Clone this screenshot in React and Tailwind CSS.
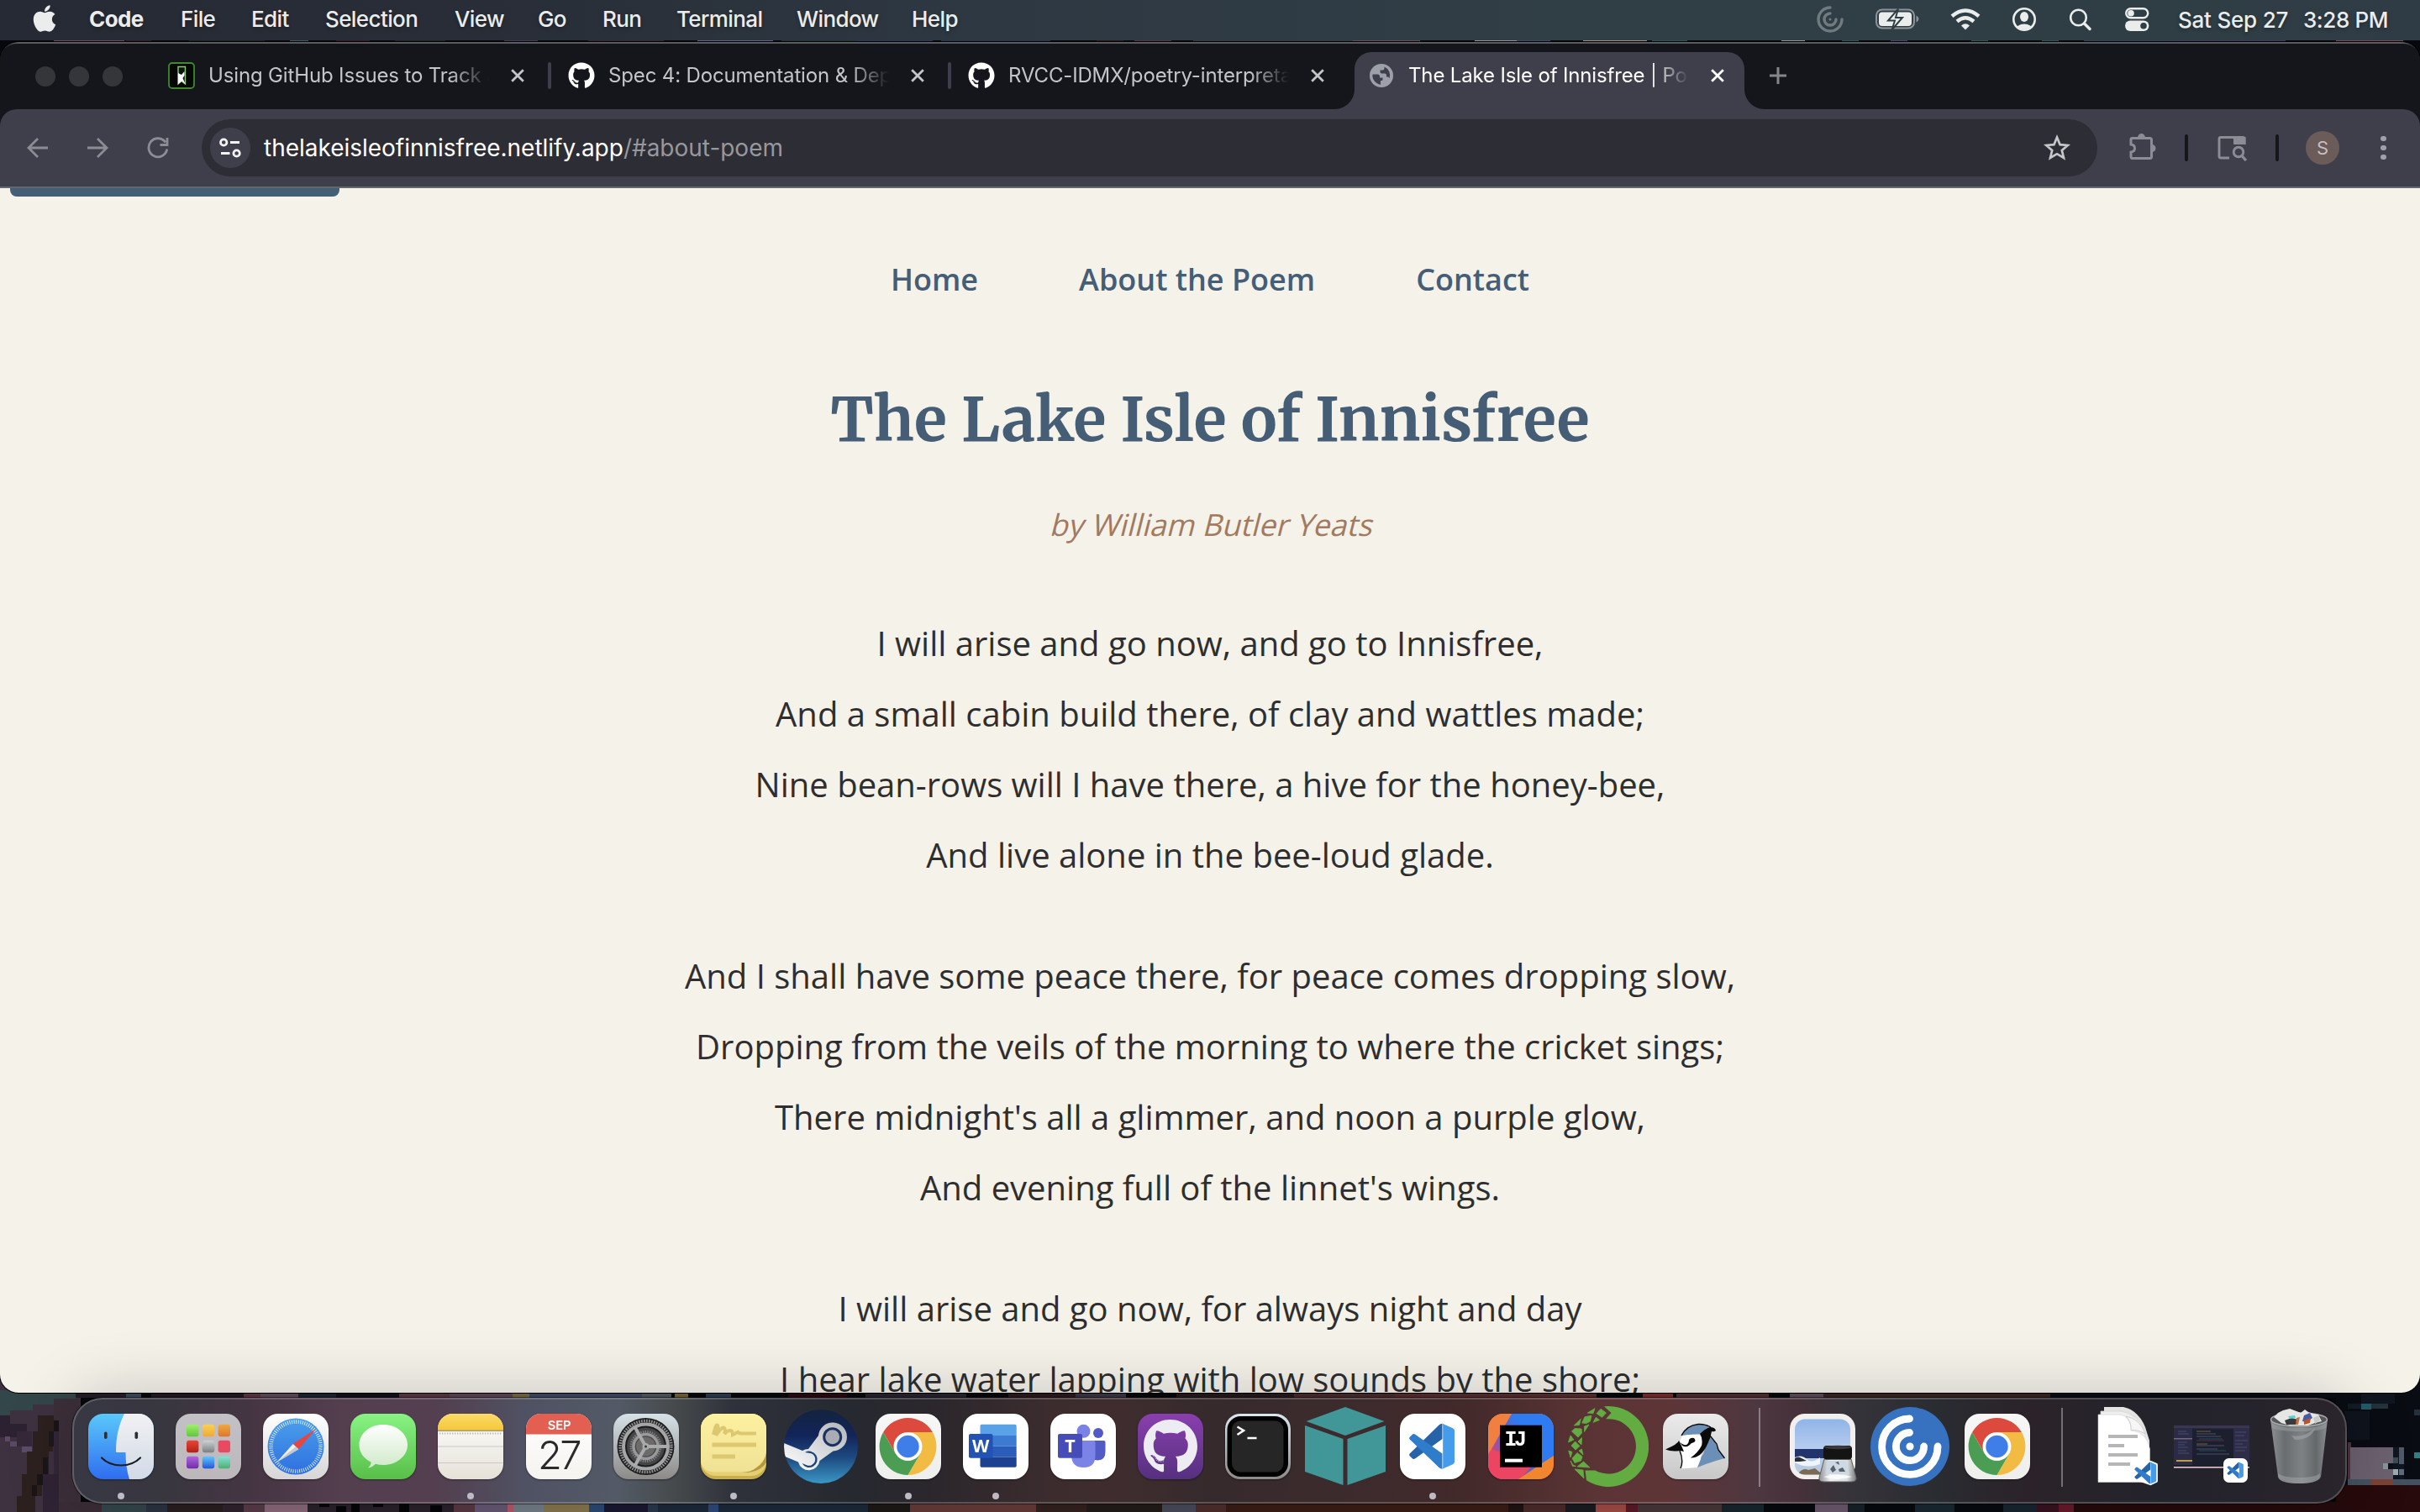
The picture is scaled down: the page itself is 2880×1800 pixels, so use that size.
import React from "react";
import { FaApple, FaGithub } from "react-icons/fa";

const MENUS = [
  ["Code", "w-[109px] font-bold"],
  ["File", "w-[84px]"],
  ["Edit", "w-[88px]"],
  ["Selection", "w-[154px]"],
  ["View", "w-[99px]"],
  ["Go", "w-[77px]"],
  ["Run", "w-[88px]"],
  ["Terminal", "w-[143px]"],
  ["Window", "w-[137px]"],
  ["Help", "w-[80px]"],
];

const STANZAS = [
  [
    "I will arise and go now, and go to Innisfree,",
    "And a small cabin build there, of clay and wattles made;",
    "Nine bean-rows will I have there, a hive for the honey-bee,",
    "And live alone in the bee-loud glade.",
  ],
  [
    "And I shall have some peace there, for peace comes dropping slow,",
    "Dropping from the veils of the morning to where the cricket sings;",
    "There midnight's all a glimmer, and noon a purple glow,",
    "And evening full of the linnet's wings.",
  ],
  [
    "I will arise and go now, for always night and day",
    "I hear lake water lapping with low sounds by the shore;",
  ],
];

/* ---------- Desktop wallpaper (pixel art) ---------- */

const PIXELS = [
  // sliver under the menu bar
  [64, 48, 84, 2, "#6b4a5e"], [150, 48, 30, 2, "#3a1a22"], [225, 48, 90, 2, "#12281f"], [345, 48, 22, 2, "#3c5a66"],
  [400, 48, 40, 2, "#3a1626"], [470, 48, 60, 2, "#16281f"], [600, 48, 40, 2, "#4a3556"], [700, 48, 90, 2, "#3b2238"],
  [830, 48, 90, 2, "#5a6494"], [930, 48, 90, 2, "#1b3a2c"], [1020, 48, 90, 2, "#26395c"], [1120, 48, 130, 2, "#24384f"],
  [1305, 48, 32, 2, "#2c160e"], [1350, 48, 44, 2, "#5a2f4a"], [1420, 48, 190, 2, "#2c3d40"], [1610, 48, 80, 2, "#6a4a5c"],
  [1755, 48, 50, 2, "#90989a"], [1805, 48, 40, 2, "#3a4a70"], [1884, 48, 76, 2, "#a58f84"], [1966, 48, 42, 2, "#1f5a58"],
  [2120, 48, 28, 2, "#90989a"], [2192, 48, 20, 2, "#1f5a5c"], [2250, 48, 20, 2, "#46456a"], [2346, 48, 20, 2, "#1f5a5c"],
  [2430, 48, 20, 2, "#1f5a5c"], [2480, 48, 110, 2, "#2f4458"], [2590, 48, 130, 2, "#343c66"], [2780, 48, 80, 2, "#7a4a4c"],
  // left side
  [0, 1640, 96, 170, "#3e3140"], [0, 1655, 90, 12, "#334649"], [0, 1667, 64, 5, "#33464a"], [0, 1672, 39, 7, "#33464a"],
  [0, 1679, 12, 6, "#33464a"], [64, 1665, 30, 130, "#3c2f3a"], [0, 1685, 12, 26, "#2c2130"], [12, 1695, 20, 16, "#2d2231"],
  [6, 1710, 6, 6, "#5a4a64"], [12, 1716, 13, 6, "#5a4a64"], [26, 1722, 12, 7, "#5c4c68"], [20, 1704, 18, 18, "#352838"],
  [45, 1685, 19, 19, "#2d211f"], [39, 1704, 24, 24, "#2d211f"], [32, 1728, 26, 27, "#2d211f"], [26, 1755, 24, 26, "#2d211f"],
  [20, 1781, 22, 19, "#2d211f"], [64, 1691, 6, 13, "#1a1416"], [58, 1704, 6, 18, "#1f1719"], [51, 1735, 6, 20, "#1c1517"],
  [44, 1755, 7, 13, "#1c1517"], [38, 1768, 6, 13, "#1c1517"], [64, 1704, 6, 96, "#33263a"], [51, 1755, 19, 45, "#2f2335"],
  // right side
  [2780, 1640, 100, 170, "#090c12"], [2794, 1671, 16, 6, "#121c24"], [2810, 1671, 12, 7, "#265a68"], [2822, 1671, 20, 6, "#23323c"],
  [2810, 1658, 40, 13, "#10161f"], [2790, 1680, 30, 34, "#0f141d"], [2873, 1678, 7, 7, "#24303a"], [2873, 1729, 7, 7, "#2f7f80"],
  [2794, 1717, 4, 50, "#4a3540"], [2797, 1723, 51, 39, "#6c616f"], [2848, 1723, 13, 39, "#10161f"], [2855, 1723, 6, 20, "#4f5a66"],
  [2836, 1742, 6, 7, "#87949e"], [2842, 1742, 6, 7, "#0c1118"], [2848, 1735, 6, 7, "#3d4a56"], [2848, 1749, 6, 7, "#a0abb0"],
  [2855, 1749, 6, 7, "#5f6c78"], [2794, 1761, 28, 7, "#44525f"], [2822, 1761, 26, 7, "#7a4236"], [2848, 1761, 32, 7, "#44525f"],
  [2780, 1768, 100, 32, "#270a0b"],
  // row between the window and the dock
  [90, 1658, 60, 6, "#241d28"], [150, 1658, 18, 6, "#3a4a5c"], [180, 1658, 110, 6, "#231a22"], [290, 1658, 20, 6, "#5f3442"],
  [310, 1658, 45, 6, "#5f4a5a"], [355, 1658, 45, 6, "#1a2432"], [400, 1658, 75, 6, "#15101c"], [475, 1658, 60, 6, "#5b3642"],
  [535, 1658, 75, 6, "#5c4456"], [610, 1658, 20, 6, "#77683c"], [630, 1658, 134, 6, "#3d4864"], [764, 1658, 35, 6, "#51575f"],
  [803, 1658, 16, 6, "#746432"], [840, 1658, 30, 6, "#2a3d52"], [938, 1658, 70, 6, "#2b0a10"], [1030, 1658, 120, 6, "#282431"],
  [1200, 1658, 80, 6, "#2c1a1e"], [1280, 1658, 60, 6, "#3a3644"], [1400, 1658, 140, 6, "#26191b"], [1540, 1658, 120, 6, "#4a2a2b"],
  [1660, 1658, 240, 6, "#5a2c2d"], [1955, 1658, 36, 6, "#7a2a2a"], [1995, 1658, 110, 6, "#502c2d"], [2130, 1658, 40, 6, "#5c4a5c"],
  [2170, 1658, 270, 6, "#3a2422"], [2440, 1658, 340, 6, "#0a0d12"],
  // row under the dock
  [70, 1788, 52, 12, "#3b2d37"], [121, 1788, 53, 12, "#34474c"], [174, 1788, 25, 12, "#2c3442"], [199, 1788, 66, 12, "#2a1e20"],
  [265, 1788, 25, 12, "#30242e"], [290, 1788, 25, 12, "#593c48"], [315, 1788, 51, 12, "#8c697c"], [366, 1788, 174, 12, "#2a222c"],
  [380, 1788, 12, 6, "#050608"], [400, 1793, 12, 7, "#050608"], [418, 1788, 10, 12, "#050608"], [444, 1788, 12, 6, "#050608"],
  [475, 1788, 12, 12, "#050608"], [512, 1792, 14, 8, "#050608"], [540, 1788, 25, 12, "#5a3945"], [565, 1788, 39, 12, "#665876"],
  [604, 1788, 7, 12, "#b8586c"], [611, 1788, 36, 12, "#747f88"], [647, 1788, 54, 12, "#89774f"], [701, 1788, 18, 12, "#2b4a78"],
  [719, 1788, 52, 12, "#1b1933"], [771, 1788, 12, 12, "#29394f"], [783, 1788, 250, 12, "#1c2a3a"], [843, 1788, 12, 12, "#2e4a7c"],
  [1033, 1788, 50, 12, "#1c1916"], [1083, 1788, 150, 12, "#683b39"], [1233, 1788, 60, 12, "#33221f"], [1293, 1788, 90, 12, "#221b1a"],
  [1383, 1788, 40, 12, "#4a4b5b"], [1423, 1788, 36, 12, "#4f2e2d"], [1459, 1788, 336, 12, "#3b1d16"], [1795, 1788, 18, 12, "#1f1412"],
  [1813, 1788, 50, 12, "#4b2b2a"], [1863, 1788, 36, 12, "#1b1c22"], [1899, 1788, 36, 12, "#a24c45"], [1935, 1788, 14, 12, "#5c1a2a"],
  [1949, 1788, 100, 12, "#48373a"], [2049, 1788, 50, 12, "#17262e"], [2099, 1788, 61, 12, "#060a0e"], [2160, 1788, 39, 12, "#6c596e"],
  [2199, 1788, 20, 12, "#17222a"], [2219, 1788, 60, 12, "#060a0e"], [2279, 1788, 47, 12, "#192932"], [2326, 1788, 58, 12, "#070b10"],
  [2384, 1788, 40, 12, "#182530"], [2424, 1788, 26, 12, "#3a1120"], [2450, 1788, 18, 12, "#691a2b"], [2468, 1788, 330, 12, "#250a0c"],
];

function Wallpaper() {
  return (
    <svg className="absolute inset-0" width="2880" height="1800" viewBox="0 0 2880 1800" shapeRendering="crispEdges" aria-hidden="true">
      {PIXELS.map(([x, y, w, h, fill], i) => (
        <rect key={i} x={x} y={y} width={w} height={h} fill={fill} />
      ))}
    </svg>
  );
}

/* ---------- Menu bar ---------- */

function MenuBar() {
  return (
    <header className="relative flex h-12 shrink-0 items-center bg-[linear-gradient(90deg,#262a34_0%,#282d37_20%,#2d3741_38%,#303d45_60%,#2f3f45_75%,#2f3c45_100%)] font-['Inter',sans-serif] text-[26px] font-medium tracking-[-0.6px] text-[#ebecec] [text-shadow:0_2px_4px_rgba(0,0,0,0.3)]">
      <div className="flex w-[106px] shrink-0 pl-[39px]">
        <FaApple className="-mt-1 h-9 w-[28px]" />
      </div>
      <nav className="flex pb-[3px]">
        {MENUS.map(([label, cls]) => (
          <span key={label} className={cls}>
            {label}
          </span>
        ))}
      </nav>
      <div className="ml-auto flex items-center pr-[38px] pb-0.5">
        <svg className="mr-[37px] opacity-35" width="34" height="34" viewBox="0 0 34 34" fill="none" stroke="currentColor" strokeWidth="3.4" strokeLinecap="round">
          <path d="M17 3A14 14 0 1 0 31 17" />
          <path d="M17 10A7 7 0 1 0 24 17" />
          <circle cx="17" cy="17" r="1.6" fill="currentColor" stroke="none" />
        </svg>
        <svg className="mr-[37px]" width="52" height="26" viewBox="0 0 52 26">
          <rect x="1" y="1.5" width="45" height="22" rx="7" fill="none" stroke="#8b949a" strokeWidth="2" />
          <path d="M48.5 8.5Q51.5 10 51.5 12.5T48.5 16.5Z" fill="#8b949a" />
          <rect x="4" y="4.5" width="39" height="16.5" rx="4" fill="#ebecec" />
          <path d="M27 .5L15 14.5H23L19.5 25.5L32 11H24Z" fill="#ebecec" stroke="#2f3e45" strokeWidth="2" />
        </svg>
        <svg className="mr-[37px]" width="36" height="26" viewBox="0 0 36 26" fill="none" stroke="#ebecec" strokeWidth="4.4">
          <path d="M2 9.2Q18-4.2 34 9.2" />
          <path d="M8 15.5Q18 7 28 15.5" />
          <path d="M13 20.5Q18 16 23 20.5L18 25.5Z" fill="#ebecec" stroke="none" />
        </svg>
        <svg className="mr-[38px]" width="30" height="30" viewBox="0 0 30 30">
          <clipPath id="user-clip"><circle cx="15" cy="15" r="12" /></clipPath>
          <circle cx="15" cy="15" r="12.7" fill="none" stroke="#ebecec" strokeWidth="2.6" />
          <g clipPath="url(#user-clip)" fill="#ebecec">
            <ellipse cx="15" cy="12" rx="5" ry="6" />
            <ellipse cx="15" cy="27" rx="10" ry="6.5" />
          </g>
        </svg>
        <svg className="mr-[38px]" width="28" height="28" viewBox="0 0 28 28" fill="none" stroke="#ebecec" strokeLinecap="round">
          <circle cx="11.5" cy="12" r="9.3" strokeWidth="2.6" />
          <path d="M18.5 19L25 25.5" strokeWidth="3.4" />
        </svg>
        <svg className="mr-[34px]" width="30" height="30" viewBox="0 0 30 30">
          <rect x="2.2" y="2.2" width="26" height="11" rx="5.5" fill="none" stroke="#ebecec" strokeWidth="2.4" />
          <circle cx="8" cy="7.7" r="3.8" fill="#ebecec" />
          <rect x="1" y="16.5" width="28.4" height="12.5" rx="6.2" fill="#ebecec" />
          <circle cx="23" cy="22.8" r="3.8" fill="#2f3e45" />
        </svg>
        <span className="w-[149px] tracking-[-0.2px]">Sat Sep 27</span>
        <span className="tracking-[-0.4px]">3:28 PM</span>
      </div>
    </header>
  );
}

/* ---------- Browser chrome ---------- */

function CloseX({ className }) {
  return (
    <svg className={className} width="16" height="16" viewBox="0 0 16 16" stroke="currentColor" strokeWidth="2.8">
      <path d="M1.2 1.2L14.8 14.8M14.8 1.2L1.2 14.8" />
    </svg>
  );
}

function NotesFavicon() {
  return (
    <svg width="32" height="32" viewBox="0 0 32 32">
      <rect x="1" y="1" width="30" height="30" rx="4" fill="#050805" stroke="#3f8a2c" strokeWidth="1.8" />
      <path d="M12 5.5H20.5V26L16 22.5L12 26Z" fill="#0d160c" stroke="#8fc97c" strokeWidth="1.4" />
      <path d="M12 13L16 15L19.5 11V16L17.5 19L20.5 26L16.5 22.5L12 26Z" fill="#fff" />
    </svg>
  );
}

function Globe() {
  return (
    <svg width="28" height="28" viewBox="0 0 28 28">
      <circle cx="14" cy="14" r="14" fill="#9da0a8" />
      <path d="M3.500 12.500H9.500Q12 12.500 12 15V16.500H15.500V18.500Q15.500 20 14 20H13V24.800A11 11 0 0 1 3.500 12.500ZM17.500 3.600V5.500Q17.500 7.500 15.500 7.500H12.500V9.500Q12.500 11.500 14.500 11.500H18Q20 11.500 20 13.500V15.500H21.500Q23 15.500 23.500 17.500A11 11 0 0 0 17.500 3.600Z" fill="#3e3f4b" />
    </svg>
  );
}

function Tab({ icon, title, active, separator }) {
  return (
    <div
      className={
        active
          ? "relative mr-3 flex h-[68px] w-[464px] items-center rounded-t-[20px] bg-[#3e3f4b] pb-3 pl-4 text-white"
          : "relative mr-3 flex h-[68px] w-[464px] items-center pb-3 pl-4 text-[#c4c5c8]"
      }
    >
      {active && (
        <>
          <div className="absolute bottom-0 -left-6 size-6 bg-[radial-gradient(circle_at_0_0,transparent_23.5px,#3e3f4b_24.5px)]" />
          <div className="absolute -right-6 bottom-0 size-6 bg-[radial-gradient(circle_at_100%_0,transparent_23.5px,#3e3f4b_24.5px)]" />
        </>
      )}
      <div className="flex size-8 shrink-0 items-center justify-center">{icon}</div>
      <div className="ml-[16px] w-[334px] shrink-0 overflow-hidden text-2xl tracking-[-0.15px] whitespace-nowrap [mask-image:linear-gradient(90deg,#000_288px,transparent_334px)]">
        {title}
      </div>
      <CloseX className="ml-[26px] shrink-0" />
      {separator && <div className="ml-7 h-8 w-1 shrink-0 rounded-full bg-[#3e3f4b]" />}
    </div>
  );
}

function TabStrip() {
  return (
    <div className="flex h-20 shrink-0 items-end rounded-t-[20px] border-t-2 border-[#595b60] bg-[#14161b]">
      <div className="flex h-full items-center gap-4 pl-[42px]">
        <div className="size-6 rounded-full bg-[#35363a]" />
        <div className="size-6 rounded-full bg-[#35363a]" />
        <div className="size-6 rounded-full bg-[#35363a]" />
      </div>
      <div className="ml-[38px] flex">
        <Tab icon={<NotesFavicon />} title="Using GitHub Issues to Track and" separator />
        <Tab icon={<FaGithub className="size-8 text-white" />} title="Spec 4: Documentation & Deployment" separator />
        <Tab icon={<FaGithub className="size-8 text-white" />} title="RVCC-IDMX/poetry-interpretation" />
        <Tab icon={<Globe />} title="The Lake Isle of Innisfree | Poetry" active />
      </div>
      <svg className="mb-[30px] ml-[18px]" width="20" height="20" viewBox="0 0 20 20" stroke="#85868a" strokeWidth="3">
        <path d="M10 0V20M0 10H20" />
      </svg>
    </div>
  );
}

function Toolbar() {
  return (
    <div className="bg-[#14161b]">
      <div className="flex h-[94px] items-center rounded-t-[20px] border-b-2 border-[#646670] bg-[#3e3f4b] pl-8 text-[#8b8c94]">
        <svg width="26" height="26" viewBox="0 0 26 26" fill="none" stroke="currentColor" strokeWidth="2.8">
          <path d="M25 13H2.5M13 2L2 13L13 24" />
        </svg>
        <svg className="ml-[45px]" width="26" height="26" viewBox="0 0 26 26" fill="none" stroke="currentColor" strokeWidth="2.8">
          <path d="M1 13H23.5M13 2L24 13L13 24" />
        </svg>
        <svg className="ml-[46px]" width="26" height="26" viewBox="0 0 26 26" fill="none" stroke="currentColor" strokeWidth="2.8">
          <path d="M22 6.5A11 11 0 1 0 23.8 14.5M24 1V9.5H15.5" />
        </svg>
        <div className="ml-[39px] flex h-[68px] w-[2256px] items-center rounded-full bg-[#2d2d35] pl-[10px] font-['Inter',sans-serif]">
          <div className="flex size-12 items-center justify-center rounded-full bg-[#3e3f4b]">
            <svg width="26" height="24" viewBox="0 0 26 24" fill="none" stroke="#f2f2f4" strokeWidth="2.8">
              <circle cx="5.2" cy="5.5" r="3.7" />
              <path d="M13 5.5H24M2 18.5H12.5" />
              <circle cx="20.6" cy="18.5" r="3.7" />
            </svg>
          </div>
          <p className="ml-4 text-[28px] tracking-[-0.02px] text-[#97989c]">
            <span className="text-white">thelakeisleofinnisfree.netlify.app</span>/#about-poem
          </p>
          <svg className="mr-8 ml-auto" width="32" height="32" viewBox="0 0 32 32" fill="none" stroke="#c6c7ca" strokeWidth="2.7">
            <path d="M16 3.6L19.6 12.2L28.8 13L21.8 19L24 28L16 23.2L8 28L10.2 19L3.2 13L12.4 12.2Z" />
          </svg>
        </div>
        <svg className="-mt-1 ml-[37px]" width="34" height="34" viewBox="0 0 34 34" fill="none" stroke="currentColor" strokeWidth="3">
          <path d="M4.5 7.5Q3 7.5 3 9V15Q7.5 15.5 7.5 19.5T3 24V29Q3 31.500 4.500 31.500H25.500Q27.500 31.500 27.500 29.500V9.500Q27.500 7.500 25.500 7.500Z" />
          <path d="M11 7A4.500 5 0 0 1 20 7ZM28 15A4.500 4.500 0 0 1 28 24Z" fill="currentColor" stroke="none" />
        </svg>
        <div className="ml-[33px] h-8 w-1 rounded-full bg-[#14161b]" />
        <svg className="ml-[35px]" width="36" height="32" viewBox="0 0 36 32" fill="none" stroke="currentColor" strokeWidth="2.9">
          <path d="M14 28H4Q2 28 2 26V5.500Q2 3.500 4 3.500H30Q32 3.500 32 5.500V12" />
          <path d="M19 3H33.500V12H19Z" fill="currentColor" stroke="none" />
          <circle cx="25" cy="21" r="5.800" />
          <path d="M29 25.500L34 31" strokeWidth="3.300" />
        </svg>
        <div className="ml-[33px] h-8 w-1 rounded-full bg-[#14161b]" />
        <div className="ml-8 flex size-10 items-center justify-center rounded-full bg-[#6b5b59] font-['Inter',sans-serif] text-[22px] text-[#c6bfbf]">
          S
        </div>
        <div className="ml-[49px] flex flex-col gap-[4.5px]">
          <div className="size-[6.5px] rounded-full bg-[#a0a1a8]" />
          <div className="size-[6.5px] rounded-full bg-[#a0a1a8]" />
          <div className="size-[6.5px] rounded-full bg-[#a0a1a8]" />
        </div>
      </div>
    </div>
  );
}

/* ---------- Web page ---------- */

function PoemPage() {
  return (
    <div className="min-h-0 flex-1 overflow-hidden bg-[#f5f2ea] text-center font-['Open_Sans','Noto_Sans',sans-serif]">
      <div className="ml-3 h-[10px] w-[392px] rounded-b-lg bg-[#455d75]" />
      <nav className="mt-[74px] flex justify-center gap-[120px] text-4xl leading-[50px] font-semibold text-[#455d75]">
        <a>Home</a>
        <a>About the Poem</a>
        <a>Contact</a>
      </nav>
      <h1 className="mt-[97px] font-['Merriweather','Noto_Serif','DejaVu_Serif',serif] text-[72px] leading-[90px] font-bold text-[#455d75]">
        The Lake Isle of Innisfree
      </h1>
      <p className="mt-[54px] origin-[50%_77%] -skew-x-[14deg] text-4xl leading-[52px] text-[#a17a5f]">by William Butler Yeats</p>
      <div className="mt-[73px] flex flex-col gap-[60px] text-[40px] leading-[84px] text-[#2e2e2e]">
        {STANZAS.map((lines, i) => (
          <div key={i}>
            {lines.map((line) => (
              <p key={line} className="whitespace-nowrap">
                {line}
              </p>
            ))}
          </div>
        ))}
      </div>
    </div>
  );
}

/* ---------- Dock icons ---------- */

function AppIcon({ id, from, to, mid, children }) {
  return (
    <svg className="overflow-visible drop-shadow-[0_1px_1px_rgba(0,0,0,0.4)]" width="78" height="78" viewBox="0 0 78 78">
      <defs>
        <linearGradient id={`${id}-bg`} x1="0" y1="0" x2="0" y2="1">
          <stop offset="0" stopColor={from} />
          {mid && <stop offset="0.5" stopColor={mid} />}
          <stop offset="1" stopColor={to} />
        </linearGradient>
        <clipPath id={`${id}-clip`}>
          <rect width="78" height="78" rx="18" />
        </clipPath>
      </defs>
      <rect width="78" height="78" rx="18" fill={`url(#${id}-bg)`} />
      <g clipPath={`url(#${id}-clip)`}>{children}</g>
    </svg>
  );
}

function Finder() {
  return (
    <AppIcon id="finder" from="#5ac8fa" to="#2f6df0">
      <defs>
        <linearGradient id="finder-face" x1="0" y1="0" x2="0" y2="1">
          <stop offset="0" stopColor="#f1f1f3" />
          <stop offset="1" stopColor="#d1dae6" />
        </linearGradient>
      </defs>
      <path d="M43 0C36 14 33 28 33 45Q33 46 34 46H44.500Q44.500 64 49 78H78V0Z" fill="url(#finder-face)" />
      <rect x="19" y="21.500" width="3.600" height="8.500" rx="1.800" fill="#2c2f38" />
      <rect x="55.500" y="21.500" width="3.600" height="8.500" rx="1.800" fill="#2c2f38" />
      <path d="M16 52.500Q25 61.500 39 61.500T62 52.500" fill="none" stroke="#1c1d22" strokeWidth="2.200" strokeLinecap="round" />
    </AppIcon>
  );
}

const LAUNCH = [
  ["#a0f06a", "#5fc63c"], ["#f8d052", "#efa93b"], ["#efa83c", "#de7630"],
  ["#ea4434", "#b02317"], ["#ccd2d6", "#7b7f80"], ["#ef4763", "#e24e5f"],
  ["#b262e0", "#6e2fa6"], ["#5fc6fa", "#2456dc"], ["#84e2d6", "#4fae72"],
];

function Launchpad() {
  return (
    <AppIcon id="launch" from="#c3c1c6" to="#bcb7bb">
      {LAUNCH.map(([a, b], i) => (
        <g key={i}>
          <linearGradient id={`launch-${i}`} x1="0" y1="0" x2="0" y2="1">
            <stop offset="0" stopColor={a} />
            <stop offset="1" stopColor={b} />
          </linearGradient>
          <rect x={13 + (i % 3) * 18.8} y={12.8 + Math.floor(i / 3) * 19} width="14.400" height="14.400" rx="3" fill={`url(#launch-${i})`} />
        </g>
      ))}
    </AppIcon>
  );
}

function Safari() {
  return (
    <AppIcon id="safari" from="#ffffff" to="#d6d6d6">
      <linearGradient id="safari-disc" x1="0" y1="0" x2="0" y2="1">
        <stop offset="0" stopColor="#4a9fea" />
        <stop offset="1" stopColor="#2f6fe0" />
      </linearGradient>
      <circle cx="39" cy="39" r="33.500" fill="url(#safari-disc)" />
      <circle cx="39" cy="39" r="29.500" fill="none" stroke="#e8f2fc" strokeWidth="4.500" strokeDasharray="0.900 1.674" />
      <path d="M63 18L42.300 42.300L35.700 36Z" fill="#e8453c" />
      <path d="M16 58L35.700 36L42.300 42.300Z" fill="#f0f0f0" />
      <path d="M16 58L39 39.200L42.300 42.300Z" fill="#c5c9ce" />
    </AppIcon>
  );
}

function Messages() {
  return (
    <AppIcon id="messages" from="#88f384" to="#58bf48">
      <linearGradient id="messages-b" x1="0" y1="0" x2="0" y2="1">
        <stop offset="0" stopColor="#ffffff" />
        <stop offset="1" stopColor="#cfe9c8" />
      </linearGradient>
      <path d="M39 13C55 13 68 23.500 68 37S55 61 39 61Q34 61 30 59.800Q26 64 21 64.500Q25 60.500 24.500 57.500C15 53 10.500 45.500 10.500 37C10.500 23.500 23 13 39 13Z" fill="url(#messages-b)" />
    </AppIcon>
  );
}

function NotesApp() {
  return (
    <AppIcon id="notes" from="#fdfdfb" to="#e6e2d9">
      <linearGradient id="notes-top" x1="0" y1="0" x2="0" y2="1">
        <stop offset="0" stopColor="#fbdc68" />
        <stop offset="1" stopColor="#f6c63a" />
      </linearGradient>
      <rect width="78" height="20" fill="url(#notes-top)" />
      <rect y="19.500" width="78" height="1.500" fill="#a79a72" />
      <path d="M2 23.500H76" stroke="#b9b8b5" strokeWidth="2" strokeDasharray="1.300 1.700" />
      <path d="M0 39H78M0 58.500H78" stroke="#c9c8c6" strokeWidth="1.200" />
    </AppIcon>
  );
}

function CalendarApp() {
  return (
    <AppIcon id="cal" from="#ffffff" to="#f5f3ef">
      <rect width="78" height="24.500" fill="#e25f52" />
      <text x="39.500" y="18.600" textAnchor="middle" fontFamily="Inter, sans-serif" fontSize="14.800" fontWeight="600" fill="#fff" letterSpacing="-0.200">SEP</text>
      <text x="39" y="65.500" textAnchor="middle" fontFamily="Inter, sans-serif" fontSize="47" fontWeight="300" fill="#2a2a2a" letterSpacing="-2.500">27</text>
    </AppIcon>
  );
}

function SettingsApp() {
  return (
    <AppIcon id="set" from="#d6e2e8" to="#8c8a88">
      <circle cx="38.500" cy="39" r="34" fill="#1d1d1e" />
      <circle cx="38.500" cy="39" r="30.500" fill="none" stroke="#8e8f90" strokeWidth="3.500" strokeDasharray="1.700 1.300" />
      <circle cx="38.500" cy="39" r="26.500" fill="none" stroke="#a5a6a8" strokeWidth="4" />
      <circle cx="38.500" cy="39" r="22.500" fill="#454546" />
      <circle cx="38.500" cy="39" r="17.500" fill="none" stroke="#7d7e80" strokeWidth="3" strokeDasharray="1.500 1.200" />
      <circle cx="38.500" cy="39" r="14.500" fill="none" stroke="#98999b" strokeWidth="3.500" />
      <circle cx="38.500" cy="39" r="11.500" fill="#6c6b6a" />
      <g stroke="#a9aaac" strokeWidth="4">
        <path d="M38.500 39H65M38.500 39L25.500 16M38.500 39L25.500 62" />
      </g>
      <circle cx="38.500" cy="39" r="4" fill="#a9aaac" />
      <circle cx="38.500" cy="39" r="1.500" fill="#3b3b3c" />
    </AppIcon>
  );
}

function Stickies() {
  return (
    <AppIcon id="sticky" from="#d9c468" to="#c9ad4b">
      <rect y="-10" width="78" height="84" rx="18" fill="#e4cf72" />
      <linearGradient id="sticky-p" x1="0" y1="0" x2="0" y2="1">
        <stop offset="0" stopColor="#fdf2a0" />
        <stop offset="1" stopColor="#f0e295" />
      </linearGradient>
      <path d="M0-4H78V44Q77 56 66 64Q60 69.500 48 69.500H18Q0 69.500 0 54Z" fill="url(#sticky-p)" />
      <path d="M78 47Q76 58 66 64.500Q60 69.500 48 70Q70 71 78 58Z" fill="#b3983c" />
      <g fill="none" stroke="#dcc870" strokeWidth="4">
        <path d="M13.500 37H66M13.500 51H41" strokeWidth="4.800" />
        <path d="M15 25Q18 11 20 14T18 26Q26 14 28 17T28 24Q32 20 35 20T38 25L44 22Q46 24 50 23.500H66" />
      </g>
    </AppIcon>
  );
}

function Steam() {
  return (
    <svg width="88" height="88" viewBox="0 0 88 88">
      <linearGradient id="steam-bg" x1="0" y1="0" x2="0" y2="1">
        <stop offset="0" stopColor="#13233f" />
        <stop offset="0.350" stopColor="#12245a" />
        <stop offset="0.650" stopColor="#1d4a80" />
        <stop offset="1" stopColor="#3b97c6" />
      </linearGradient>
      <linearGradient id="steam-fg" x1="1" y1="0" x2="0" y2="1">
        <stop offset="0" stopColor="#b3b6ba" />
        <stop offset="1" stopColor="#ffffff" />
      </linearGradient>
      <clipPath id="steam-clip"><circle cx="44" cy="44" r="44" /></clipPath>
      <circle cx="44" cy="44" r="44" fill="url(#steam-bg)" />
      <g clipPath="url(#steam-clip)">
        <path d="M0 40L22 49Q25 47 29 47L41 31A17 17 0 1 1 58.500 49.500L42.500 61A13 13 0 0 1 17 62.500L0 55.500Z" fill="url(#steam-fg)" />
        <circle cx="57.700" cy="32.700" r="11.500" fill="#1a3162" />
        <circle cx="57.700" cy="32.700" r="8.500" fill="#a9adb3" />
        <path d="M25 51A9.700 9.700 0 1 1 21.500 64L27 66.300A7.500 7.500 0 0 0 32.500 52.300Z" fill="#1d4377" />
      </g>
    </svg>
  );
}

function Chrome({ id }) {
  const seg = "M29.400-17A34 34 0 0 0-29.400-17L-14.700 8.500A17 17 0 0 1 0-17Z";
  return (
    <AppIcon id={id} from="#f7f7f7" to="#eeeeec">
      <g transform="translate(38.500 39)">
        <path d={seg} fill="#db4a3d" />
        <path d={seg} transform="rotate(120)" fill="#f2bb42" />
        <path d={seg} transform="rotate(240)" fill="#4c9d54" />
        <circle r="16.500" fill="#fff" />
        <circle r="13.200" fill="#3f7ee8" />
      </g>
    </AppIcon>
  );
}

function Word() {
  return (
    <AppIcon id="word" from="#ffffff" to="#ffffff">
      <path d="M20.500 14.500Q20.500 12.700 22 12.700H62Q63.700 12.700 63.700 14.500V26H20.500Z" fill="#5aa2e8" />
      <path d="M20.500 26H63.700V38.500H20.500Z" fill="#3d7bd2" />
      <path d="M20.500 38.500H63.700V51.500H20.500Z" fill="#2a5cba" />
      <path d="M20.500 51.500H63.700V62Q63.700 63.700 62 63.700H22Q20.500 63.700 20.500 62Z" fill="#1b4190" />
      <rect x="7" y="24" width="28.500" height="28.700" rx="2" fill="#2152b4" />
      <text x="21.200" y="45.500" textAnchor="middle" fontFamily="Open Sans, sans-serif" fontSize="21" fontWeight="700" fill="#fff">W</text>
    </AppIcon>
  );
}

function Teams() {
  return (
    <AppIcon id="teams" from="#ffffff" to="#ffffff">
      <circle cx="57" cy="23" r="6" fill="#5259c4" />
      <circle cx="39.500" cy="20.800" r="8" fill="#7a82e4" />
      <path d="M50 32H63.500Q65.500 32 65.500 34V45Q65.500 55.500 56.500 55.500Q53 55.500 50 53Z" fill="#525ac6" />
      <path d="M25 32H51.500Q53.500 32 53.500 34V50Q53.500 64 39.500 64T25 50Z" fill="#7b83e6" />
      <rect x="9" y="24" width="29" height="28.700" rx="2" fill="#474db8" />
      <text x="23.500" y="45.700" textAnchor="middle" fontFamily="Open Sans, sans-serif" fontSize="21.500" fontWeight="700" fill="#fff">T</text>
    </AppIcon>
  );
}

function GitHubDesktop() {
  return (
    <AppIcon id="ghd" from="#8a3fae" to="#55307f">
      <FaGithub x="6" y="6" size={66} color="#eeecf3" />
    </AppIcon>
  );
}

function TerminalApp() {
  return (
    <AppIcon id="term" from="#d8e6ee" to="#8d8b89">
      <rect x="2.500" y="3" width="72.500" height="72" rx="16" fill="#000" />
      <rect x="8" y="8.500" width="61.500" height="61" rx="10" fill="#262626" />
      <path d="M14.500 15.500L22 20L14.500 25" fill="none" stroke="#fff" strokeWidth="2.600" />
      <path d="M26.500 29H37.500" stroke="#fff" strokeWidth="2.600" />
    </AppIcon>
  );
}

function Cube() {
  return (
    <svg width="96" height="94" viewBox="0 0 96 94" fill="#419798">
      <path d="M48 0L94.500 17L48 34L1.500 17Z" />
      <path d="M0 22L45.500 38V93L0 77Z" />
      <path d="M50.500 38L96 22V77L50.500 93Z" />
    </svg>
  );
}

function VSMark() {
  return (
    <>
      <path d="M50.500 11.700V30L18 53.500Q16 54.500 14.500 53L11.500 50Q10.500 48.800 11.700 47.500L46.500 13.500Q48 12 50.500 11.700Z" fill="#2763a8" />
      <path d="M50.500 65.700V47.500L18 24.500Q16 23.500 14.500 25L11.500 28Q10.500 29.200 11.700 30.500L46.500 64Q48 65.500 50.500 65.700Z" fill="#2f7ccb" />
      <path d="M50.500 11.700L63 17.200Q65 18.200 65 20.200V57.200Q65 59.200 63 60.200L50.500 65.700Q51.200 65 51.200 63V14.500Q51.200 12.300 50.500 11.700Z" fill="#449ceb" />
    </>
  );
}

function VSCode() {
  return (
    <AppIcon id="vsc" from="#ffffff" to="#ffffff">
      <VSMark />
    </AppIcon>
  );
}

function IntelliJ() {
  return (
    <AppIcon id="ij" from="#ee7e3e" to="#ee3f62" mid="#e9496c">
      <linearGradient id="ij-blue" x1="0.100" y1="0.700" x2="0.600" y2="0.300">
        <stop offset="0" stopColor="#c04a86" />
        <stop offset="0.600" stopColor="#5a62cc" />
        <stop offset="1" stopColor="#2e7bf2" />
      </linearGradient>
      <path d="M0 0H28L14 38L0 50Z" fill="#f08040" />
      <path d="M28 0H78V50L40 78L4 42Z" fill="url(#ij-blue)" />
      <path d="M4 42L52 62L38 78H0V48Z" fill="#ec4563" />
      <path d="M78 50V78H36L64 59Z" fill="#f0872f" />
      <rect x="14" y="13.700" width="50" height="50" fill="#000" />
      <text x="19.500" y="38" fontFamily="Liberation Mono, monospace" fontSize="25" fontWeight="700" fill="#fff" letterSpacing="-3.500">IJ</text>
      <rect x="20" y="53.700" width="21" height="4" fill="#fff" />
    </AppIcon>
  );
}

const SCALES = [
  "34,8.7 39,3.3 45.5,8 40.5,13.3",
  "23.3,8 32,2.7 30,8.7",
  "16.7,20 20,12.700 28,11.3 26.5,18 22,20.500",
  "30,19.3 33.3,13.3 37.5,16.500",
  "7.3,23 15.3,15.3 13.5,22.500",
  "19.5,30.500 19.5,24 25,22",
  "4.5,30 8,26.500 16,27 16.500,32 12,37",
  "0.500,43 3,35 7,40",
  "4,47 8.5,42 14,47.5 9,52",
  "12,42 16.500,37.500 16,46",
  "0.700,53 5,54.500 3,61",
  "5,62 11,55.500 17,60 15.500,65 8,67.500",
  "13,53 16.500,51 18,58",
  "3,65 6,70 9.500,71.500 5.500,71.500",
  "11,72 18.5,66 26,73",
  "8,75 18,76 19,86",
];

function Anaconda() {
  return (
    <svg width="96" height="96" viewBox="0 0 96 96" fill="#62ac42">
      <path d="M43 .3A48 48 0 1 1 22 88.300L20.500 76.500H32.500A32.700 32.700 0 1 0 45 15.300L51.500 8Z" />
      {SCALES.map((points) => (
        <polygon key={points} points={points} stroke="#62ac42" strokeWidth="0.800" />
      ))}
    </svg>
  );
}

function BlueJ() {
  return (
    <AppIcon id="bluej" from="#ebebeb" to="#c8c8c8">
      <path d="M22 26Q28 14 42 12.500Q50 12 56 17L50 24Q36 24 22 26Z" fill="#6b8fb6" />
      <path d="M55 26L62 34L66 43L73.500 53Q58 57 41 64Q42 55 48 48Z" fill="#6b8fb6" />
      <path d="M23 26.500Q34 24 46 26L47 40L45 54L41 64L21 65.500Q25 56 21 46L19 42L20 33Z" fill="#fff" />
      <path d="M19 32Q18 36 3 42.500Q10 45.500 20 44L25 45L22 38Z" fill="#0a0a0a" />
      <path d="M19 32Q23 38 28 37Q31 35 31 31Q33 28 37 29Q40 32 37 34Q33 35 32 37Q28 41 23 38Z" fill="#0a0a0a" />
      <path d="M44 24Q50 18 56 16Q62 16 63 20Q61 22 58 21Q57 28 54 34Q50 44 44 49Q38 53 33 52.500Q42 46 46 38Q48 30 44 24Z" fill="#0a0a0a" />
      <path d="M22 26Q28 14 42 12.500Q50 12 57 16M56 26L64 36L66 43L73.500 53M20 44Q25 56 21 65" fill="none" stroke="#0a0a0a" strokeWidth="1.400" />
    </AppIcon>
  );
}

function PreviewApp() {
  return (
    <svg className="mt-1.5 ml-0.5 overflow-visible" width="80" height="84" viewBox="0 0 80 84">
      <linearGradient id="pv-sky" x1="0" y1="0" x2="0" y2="1">
        <stop offset="0" stopColor="#8fb4e8" />
        <stop offset="1" stopColor="#b7cdee" />
      </linearGradient>
      <linearGradient id="pv-glass" x1="0" y1="0" x2="1" y2="0">
        <stop offset="0" stopColor="#8e9296" />
        <stop offset="0.300" stopColor="#eef0f1" />
        <stop offset="0.750" stopColor="#dcdfe0" />
        <stop offset="1" stopColor="#77797b" />
      </linearGradient>
      <clipPath id="pv-clip"><rect x="6" y="6.500" width="66" height="66" rx="12" /></clipPath>
      <rect width="78" height="78" rx="18" fill="#f1f0ee" />
      <g clipPath="url(#pv-clip)">
        <rect x="6" y="6" width="66" height="36" fill="url(#pv-sky)" />
        <rect x="6" y="42" width="66" height="12" fill="#23336c" />
        <rect x="6" y="53" width="66" height="20" fill="#b9cbe2" />
        <path d="M6 52Q14 48 20 54T36 52V60Q20 66 6 58Z" fill="#eef4fa" />
        <path d="M6 53Q10 50 14 53L20 56L12 57H6Z" fill="#2a2d3c" />
        <path d="M10 71Q16 64 22 67L30 65L36 70V74H10Z" fill="#7c6a55" />
      </g>
      <path d="M41 54H73L79 76Q80 81 73 81H41Q34 81 35 76Z" fill="url(#pv-glass)" stroke="#5d5f61" strokeWidth="1" />
      <path d="M45 56H67L71 72H43Z" fill="#ccd8e4" />
      <path d="M48 66L52 61L55 67L51 70ZM58 66L63 64L66 69H59ZM54 58L58 57L59 61Z" fill="#5c6068" />
      <path d="M40 75Q57 70 74 75Q57 81 40 75Z" fill="#fff" opacity="0.800" />
      <rect x="40" y="38" width="34" height="16.500" rx="4" fill="#141414" />
      <ellipse cx="57" cy="40" rx="16" ry="2.200" fill="#3a3a3a" />
    </svg>
  );
}

function Swirl() {
  return (
    <svg width="94" height="94" viewBox="0 0 94 94" fill="none" stroke="#fff" strokeWidth="8.800" strokeLinecap="round">
      <circle cx="47" cy="47" r="47" fill="#3672c0" stroke="none" />
      <path d="M46.500 14A33.200 33.200 0 1 0 80 47" />
      <path d="M46.500 30.500A16.600 16.600 0 1 0 63.600 47" />
      <circle cx="47" cy="47" r="4.600" fill="#fff" stroke="none" />
    </svg>
  );
}

function DocStack() {
  return (
    <svg className="overflow-visible" width="70" height="94" viewBox="0 0 70 94">
      <path d="M7 0H30Q48 4 56 24L61 40V80H7Z" fill="#e4e4e4" />
      <path d="M3 5H28Q46 8 56 28V84H3Z" fill="#efefef" stroke="#d2d2d2" strokeWidth="0.800" />
      <path d="M0 9H26Q38 11 40 28Q58 30 61.500 50V89.500H0Z" fill="#fff" stroke="#d0d0d0" strokeWidth="0.600" />
      <path d="M33 11Q40 18 39 28Q46 26 56 32Q50 14 33 11Z" fill="#f6f6f6" stroke="#c4c4c4" strokeWidth="0.800" />
      <path d="M12 35H47M12 46H31M12 57H47M12 68H38" stroke="#b6b6b6" strokeWidth="4" />
      <g transform="translate(38 60) scale(0.480)">
        <path d="M50.500 11.700L65 18V59L50.500 65.700L14.500 53L11 49L11 29L14 25Z" fill="#fff" stroke="#fff" strokeWidth="7" strokeLinejoin="round" />
        <VSMark />
      </g>
    </svg>
  );
}

function WindowThumb() {
  return (
    <svg className="overflow-visible" width="90" height="90" viewBox="0 0 90 90">
      <rect y="20" width="90" height="50" fill="#1c1f2e" />
      <rect y="20" width="90" height="3.500" fill="#3a3550" />
      <rect y="23" width="22" height="44" fill="#2c2b45" />
      <rect x="71" y="23" width="19" height="44" fill="#2e2c47" />
      <rect y="35" width="22" height="1.500" fill="#70687c" />
      <rect x="3" y="61" width="19" height="2" fill="#c79a42" />
      <g stroke="#4b567a" strokeWidth="0.800">
        <path d="M5 27H15M5 30H18M5 40H16M5 43H13M5 46H17M5 50H15M5 53H18M73 28H86M73 32H84M73 38H88M73 42H82M73 46H87M73 50H85" />
        <path d="M27 30H50M27 33H56M27 44H60M27 48H52M27 54H66" stroke="#565d78" />
        <path d="M27 27H44M27 42H40" stroke="#8a7638" />
        <path d="M30 36H58M30 50H62" stroke="#2f5c60" />
        <path d="M27 38H60" stroke="#6a3450" />
      </g>
      <rect y="69" width="90" height="1.600" fill="#e9c6cc" />
      <rect x="59" y="59" width="29" height="29" rx="6.500" fill="#fff" />
      <g transform="translate(59.500 59.500) scale(0.360)">
        <VSMark />
      </g>
    </svg>
  );
}

function Trash() {
  return (
    <svg width="70" height="92" viewBox="0 0 70 92">
      <linearGradient id="trash-b" x1="0" y1="0" x2="1" y2="0">
        <stop offset="0" stopColor="#8d9092" />
        <stop offset="0.250" stopColor="#6a6d6f" />
        <stop offset="0.550" stopColor="#7f8284" />
        <stop offset="0.800" stopColor="#65686a" />
        <stop offset="1" stopColor="#8d9092" />
      </linearGradient>
      <path d="M1 14H69L61 82Q58 90 35 90T10 82Z" fill="url(#trash-b)" />
      <ellipse cx="35" cy="14" rx="33.500" ry="8" fill="#55585a" stroke="#a9acae" strokeWidth="1.500" />
      <path d="M5 11L10 6L16 3L24 1L32 4L37 6L42 2L46 5L52 7L58 8L62 16L54 18L46 21H24L14 18Z" fill="#e6e6e4" />
      <path d="M18 15L26 12L34 14L33 20H20Z" fill="#3a3a3c" />
      <path d="M22 10L30 9L31 12L24 13Z" fill="#5ad0c8" />
      <path d="M32 12L36 11L34 20L31 20Z" fill="#c2703c" />
      <path d="M41 9L48 6L51 12L44 17L39 16Z" fill="#4a5aa0" />
      <path d="M41 15L49 12L48 18L41 20Z" fill="#b4562e" />
      <path d="M52 12L58 9L60 15L54 19Z" fill="#c9c9c7" />
      <path d="M2 18Q12 24 35 24T68 18L67 24Q58 28 35 28T3 24Z" fill="#989b9d" opacity="0.600" />
      <path d="M26 33Q42 36 54 24Q50 38 30 38Z" fill="#a2a5a7" opacity="0.600" />
      <path d="M10 78Q16 83 35 83T60 78L59.500 83Q56 90 35 90T10.500 83Z" fill="#a4a7a9" opacity="0.500" />
    </svg>
  );
}

function DockItem({ children, running }) {
  return (
    <div className="relative flex h-full w-[104.1px] shrink-0 items-center justify-center pb-[10px]">
      {children}
      {running && <div className="absolute bottom-[3px] left-12 size-2 rounded-full bg-[#bdbac4]" />}
    </div>
  );
}

function DockDivider() {
  return (
    <div className="flex w-[47px] shrink-0 justify-center">
      <div className="mb-2 ml-0.5 h-[94px] w-0.5 bg-white/35" />
    </div>
  );
}

function Dock() {
  return (
    <div className="absolute top-[1664px] left-[86px] flex h-[126px] w-[2707px] items-center rounded-[36px] border-2 border-white/20 bg-[linear-gradient(90deg,#373843_0%,#38363f_4%,#463543_8%,#543f4f_12%,#533f4f_16%,#4f5263_20%,#535a66_24%,#464a4c_26.5%,#30323b_29%,#262930_34%,#2b272c_38%,#3c2c2e_43%,#3f2d2e_46%,#362a2c_50%,#3c2b2d_56%,#42292a_61%,#5b3435_67%,#5e3537_70%,#4d3740_74%,#453139_76%,#36343a_78%,#292c31_82%,#2b2329_86%,#22232b_92%,#2a242b_100%)] bg-origin-border pl-1 shadow-[0_0_0_1px_rgba(0,0,0,0.5),0_0_80px_rgba(0,0,0,0.22)]">
      <DockItem running><Finder /></DockItem>
      <DockItem><Launchpad /></DockItem>
      <DockItem><Safari /></DockItem>
      <DockItem><Messages /></DockItem>
      <DockItem running><NotesApp /></DockItem>
      <DockItem><CalendarApp /></DockItem>
      <DockItem><SettingsApp /></DockItem>
      <DockItem running><Stickies /></DockItem>
      <DockItem><Steam /></DockItem>
      <DockItem running><Chrome id="chrome-a" /></DockItem>
      <DockItem running><Word /></DockItem>
      <DockItem><Teams /></DockItem>
      <DockItem><GitHubDesktop /></DockItem>
      <DockItem><TerminalApp /></DockItem>
      <DockItem><Cube /></DockItem>
      <DockItem running><VSCode /></DockItem>
      <DockItem><IntelliJ /></DockItem>
      <DockItem><Anaconda /></DockItem>
      <DockItem><BlueJ /></DockItem>
      <DockDivider />
      <DockItem><PreviewApp /></DockItem>
      <DockItem><Swirl /></DockItem>
      <DockItem><Chrome id="chrome-b" /></DockItem>
      <DockDivider />
      <DockItem><div className="ml-2"><DocStack /></div></DockItem>
      <DockItem><WindowThumb /></DockItem>
      <DockItem><Trash /></DockItem>
    </div>
  );
}

export default function App() {
  return (
    <div className="relative flex h-[1800px] w-[2880px] flex-col overflow-hidden bg-[#06080b]">
      <Wallpaper />
      <MenuBar />
      <main className="relative mt-0.5 flex h-[1608px] flex-col overflow-hidden rounded-[22px] font-['Inter',sans-serif] shadow-[0_0_0_1px_#000]">
        <TabStrip />
        <Toolbar />
        <PoemPage />
      </main>
      <Dock />
    </div>
  );
}
